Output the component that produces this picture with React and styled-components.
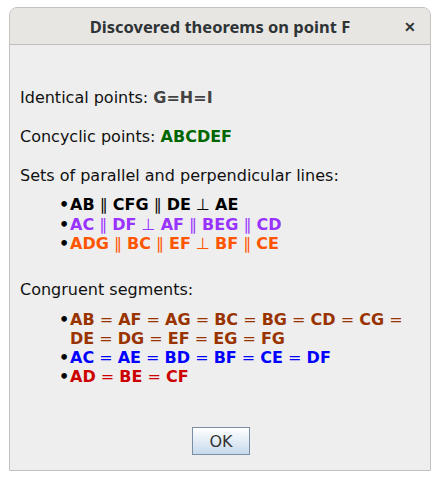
import React from "react";
import styled, { createGlobalStyle } from "styled-components";

const Global = createGlobalStyle`
  html, body { margin: 0; padding: 0; background: #ffffff; }
  body { font-family: "DejaVu Sans", sans-serif; }
`;

const Page = styled.div`
  width: 440px;
  height: 480px;
  padding: 7px 9px 0 9px;
  box-sizing: border-box;
`;

const Dialog = styled.div`
  width: 422px;
  height: 464px;
  box-sizing: border-box;
  border: 1px solid #c4c2bf;
  border-radius: 8px 8px 0 0;
  background: #eeeeee;
  display: flex;
  flex-direction: column;
  overflow: hidden;
`;

const TitleBar = styled.div`
  height: 36px;
  flex: none;
  background: #e8e6e3;
  border-bottom: 1px solid #c0bdb8;
  display: flex;
  align-items: center;
  justify-content: center;
  position: relative;
  font-family: "Noto Sans", sans-serif;
  font-weight: bold;
  font-size: 16.5px;
  color: #2e3436;
`;

const Close = styled.span`
  position: absolute;
  right: 14px;
  top: 9px;
  font-size: 14px;
  font-weight: bold;
  color: #2e3436;
`;

const Body = styled.div`
  flex: 1;
  padding: 43px 10px 0 10px;
  font-size: 16px;
  color: #111;
  display: flex;
  flex-direction: column;
`;

const Para = styled.div`
  margin-bottom: ${(p) => p.gap ?? 20}px;
  line-height: 19px;
`;

const Strong = styled.b`
  color: ${(p) => p.color};
`;

const List = styled.ul`
  list-style: none;
  margin: 0 0 ${(p) => p.gap || 0}px 0;
  padding: 0 0 0 39px;
  line-height: ${(p) => p.lh || 19}px;
`;

const Item = styled.li`
  display: flex;
  font-weight: bold;
  color: ${(p) => p.color};
  &::before {
    content: "•";
    color: #000;
    width: 11px;
    flex: none;
  }
`;

const Op = styled.span`
  font-weight: normal;
`;

const Footer = styled.div`
  margin-top: auto;
  height: 43px;
  display: flex;
  justify-content: center;
`;

const Button = styled.button`
  width: 58px;
  height: 28px;
  border: 1px solid #7a8ea6;
  border-radius: 0;
  background: linear-gradient(#ffffff, #c7d9ec);
  font-family: "DejaVu Sans", sans-serif;
  font-size: 16px;
  color: #333;
  margin-left: 2px;
  padding: 0;
`;

const Expr = ({ parts }) =>
  parts.map((p, i) =>
    i % 2 === 1 ? (
      <Op key={i}>{"\u00a0" + p + " "}</Op>
    ) : (
      <span key={i}>{p}</span>
    )
  );

export default function App() {
  return (
    <Page>
      <Global />
      <Dialog>
        <TitleBar>
          Discovered theorems on point F
          <Close>✕</Close>
        </TitleBar>
        <Body>
          <Para>
            Identical points: <Strong color="#444444">G=H=I</Strong>
          </Para>
          <Para>
            Concyclic points: <Strong color="#006600">ABCDEF</Strong>
          </Para>
          <Para gap={10}>Sets of parallel and perpendicular lines:</Para>
          <List gap={26} lh={19.5}>
            <Item color="#000000">
              <span><Expr parts={["AB", "∥", "CFG", "∥", "DE", "⊥", "AE"]} /></span>
            </Item>
            <Item color="#9933ff">
              <span><Expr parts={["AC", "∥", "DF", "⊥", "AF", "∥", "BEG", "∥", "CD"]} /></span>
            </Item>
            <Item color="#ff5500">
              <span><Expr parts={["ADG", "∥", "BC", "∥", "EF", "⊥", "BF", "∥", "CE"]} /></span>
            </Item>
          </List>
          <Para gap={11}>Congruent segments:</Para>
          <List>
            <Item color="#993300">
              <span>
                <Expr parts={["AB", "=", "AF", "=", "AG", "=", "BC", "=", "BG", "=", "CD", "=", "CG", "=", "DE", "=", "DG", "=", "EF", "=", "EG", "=", "FG"]} />
              </span>
            </Item>
            <Item color="#0000ff">
              <span><Expr parts={["AC", "=", "AE", "=", "BD", "=", "BF", "=", "CE", "=", "DF"]} /></span>
            </Item>
            <Item color="#cc0000">
              <span><Expr parts={["AD", "=", "BE", "=", "CF"]} /></span>
            </Item>
          </List>
          <Footer>
            <Button>OK</Button>
          </Footer>
        </Body>
      </Dialog>
    </Page>
  );
}
